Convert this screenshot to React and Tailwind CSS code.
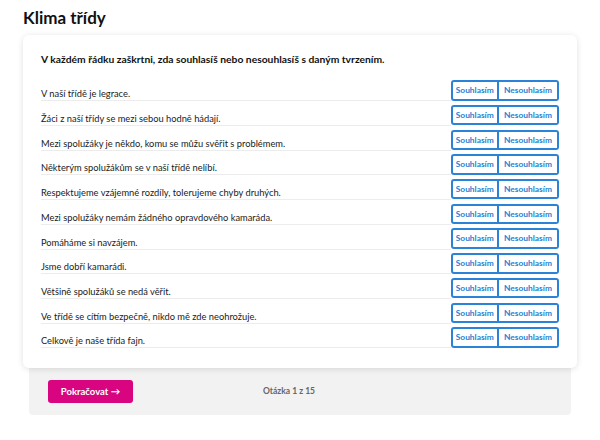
import React from "react";

const items = [
  "V naší třídě je legrace.",
  "Žáci z naší třídy se mezi sebou hodně hádají.",
  "Mezi spolužáky je někdo, komu se můžu svěřit s problémem.",
  "Některým spolužákům se v naší třídě nelíbí.",
  "Respektujeme vzájemné rozdíly, tolerujeme chyby druhých.",
  "Mezi spolužáky nemám žádného opravdového kamaráda.",
  "Pomáháme si navzájem.",
  "Jsme dobří kamarádi.",
  "Většině spolužáků se nedá věřit.",
  "Ve třídě se cítím bezpečně, nikdo mě zde neohrožuje.",
  "Celkově je naše třída fajn.",
];

export default function App() {
  return (
    <div className="w-[600px] h-[440px] bg-white text-[#1a1a1a] font-['Lato','Noto_Sans',sans-serif]">
      <div className="px-[23px] pt-[6px]">
        <h1 className="text-[17px] font-bold leading-[24px] h-[29px] text-[#111]">Klima třídy</h1>
        <div className="relative z-10 bg-white rounded-[6px] shadow-[0_1px_6px_rgba(0,0,0,0.12)] px-[18px] pt-[16px] pb-[18px]">
          <p className="text-[10.3px] font-bold leading-[16px] mb-[11px] text-[#111]">
            V každém řádku zaškrtni, zda souhlasíš nebo nesouhlasíš s daným tvrzením.
          </p>
          <div className="flex flex-col">
            {items.map((t, i) => (
              <div key={i} className="flex items-stretch h-[24.73px]">
                <div className="flex-1 flex items-end border-b border-[#ececec] pb-[1px] mb-[1.5px]">
                  <span className="text-[9.3px] leading-[11px]">{t}</span>
                </div>
                <div className="flex items-center">
                  <div className="flex h-[20.5px]">
                    <button className="h-full w-[48.5px] border-2 border-[#2a83d6] rounded-l-[3px] text-[8.4px] font-bold text-[#1f7fd3] leading-none">
                      Souhlasím
                    </button>
                    <button className="h-full w-[60px] border-2 border-l-0 border-[#2a83d6] rounded-r-[3px] text-[8.4px] font-bold text-[#1f7fd3] leading-none">
                      Nesouhlasím
                    </button>
                  </div>
                </div>
              </div>
            ))}
          </div>
        </div>
        <div className="mx-[6px] bg-[#f2f2f2] rounded-b-[4px] h-[47px] flex items-center px-[19px]">
          <button className="w-[85px] h-[23px] bg-[#d9047f] text-white rounded-[3px] text-[9.5px] font-bold leading-none">
            Pokračovat →
          </button>
          <span className="ml-[130px] text-[8.5px] font-bold text-[#666]">Otázka 1 z 15</span>
        </div>
      </div>
    </div>
  );
}
